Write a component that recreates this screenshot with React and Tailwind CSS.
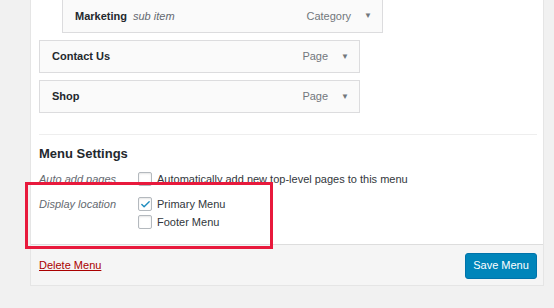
import { Check } from "lucide-react";

const font = { fontFamily: '"Liberation Sans", Arial, sans-serif' };

function MenuItem({ title, sub, type, className }) {
  return (
    <div className={`flex items-center h-[33px] w-[321px] bg-[#fafafa] border border-[#dcdcde] pl-[12px] pr-[10px] ${className}`}>
      <span className="text-[11px] font-bold text-[#23282d]">{title}</span>
      {sub && <span className="ml-[6px] text-[11px] italic text-[#646970]">{sub}</span>}
      <span className="ml-auto text-[11px] text-[#72777c]">{type}</span>
      <span className="ml-[13px] text-[8px] text-[#72777c]">▼</span>
    </div>
  );
}

function Checkbox({ checked }) {
  return (
    <span className="w-[14px] h-[14px] border border-[#b4b9be] rounded-[2px] bg-white shadow-[inset_0_1px_2px_rgba(0,0,0,0.1)] flex items-center justify-center">
      {checked && <Check size={11} strokeWidth={3} className="text-[#1e8cbe]" />}
    </span>
  );
}

export default function App() {
  return (
    <div className="relative w-[554px] h-[308px] bg-[#f1f1f1] overflow-hidden" style={font}>
      <div className="ml-[30px] w-[514px] border-x border-b border-[#e5e5e5] bg-white flex flex-col">
        {/* Menu structure */}
        <div className="pl-[8px] pr-[6px] flex flex-col gap-[7px]">
          <MenuItem title="Marketing" sub="sub item" type="Category" className="ml-[23px] h-[32px] border-t-0" />
          <MenuItem title="Contact Us" type="Page" />
          <MenuItem title="Shop" type="Page" />
        </div>

        {/* Menu settings */}
        <div className="mt-[21px] ml-[8px] mr-[6px] border-t border-[#eeeeee] pb-[13px]">
          <h3 className="mt-[9px] text-[13px] leading-[20px] font-bold text-[#23282d]">Menu Settings</h3>
          <div className="mt-[5px] flex items-center h-[20px]">
            <span className="w-[99px] text-[11px] italic text-[#646970]">Auto add pages</span>
            <Checkbox />
            <span className="ml-[5px] text-[11px] text-[#32373c]">Automatically add new top-level pages to this menu</span>
          </div>
          <div className="mt-[6px] flex items-start">
            <span className="w-[99px] h-[18px] leading-[18px] text-[11px] italic text-[#646970]">Display location</span>
            <div className="flex flex-col">
              <div className="flex items-center h-[18px]">
                <Checkbox checked />
                <span className="ml-[5px] text-[11px] text-[#32373c]">Primary Menu</span>
              </div>
              <div className="flex items-center h-[18px]">
                <Checkbox />
                <span className="ml-[5px] text-[11px] text-[#32373c]">Footer Menu</span>
              </div>
            </div>
          </div>
        </div>

        {/* Footer */}
        <div className="h-[41px] bg-[#f5f5f5] border-t border-[#dddddd] flex items-center pl-[8px] pr-[6px]">
          <a className="text-[11px] text-[#a00] underline">Delete Menu</a>
          <button className="ml-auto h-[26px] w-[72px] mt-[1px] rounded-[3px] bg-[#0085ba] border border-[#0073aa] text-white text-[11px]">
            Save Menu
          </button>
        </div>
      </div>

      {/* annotation */}
      <div className="absolute left-[25px] top-[182px] w-[248px] h-[67px] border-[3px] border-[#e8193c]" />
    </div>
  );
}
